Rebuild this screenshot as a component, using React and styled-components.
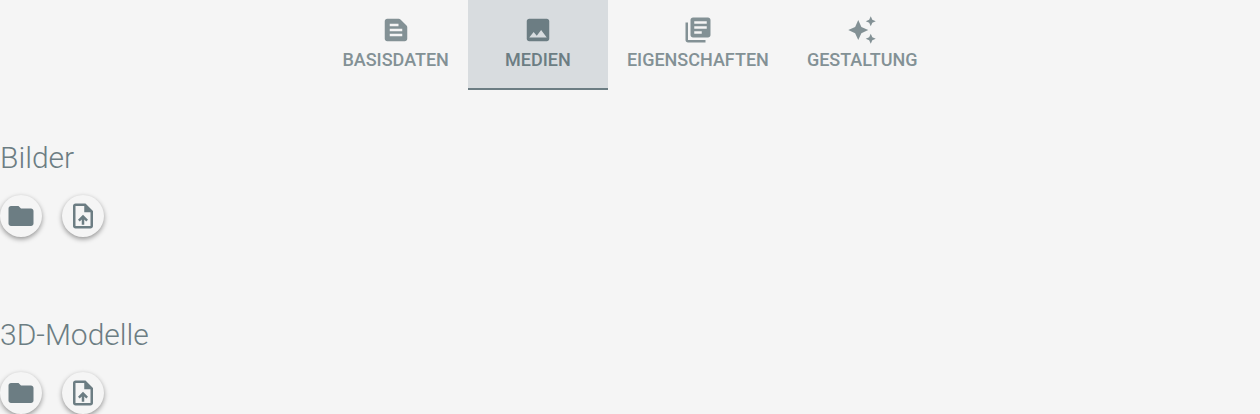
import React, { useState } from "react";
import styled, { createGlobalStyle } from "styled-components";
import { MdTextSnippet, MdImage, MdLibraryBooks, MdAutoAwesome, MdFolder, MdOutlineUploadFile } from "react-icons/md";

const GlobalStyle = createGlobalStyle`
  *, *::before, *::after { box-sizing: border-box; }
  body {
    margin: 0;
    background: #f5f5f5;
    color: #6c7d83;
    font-family: Roboto, "Liberation Sans", sans-serif;
  }
`;

const TabBar = styled.nav`
  display: flex;
  justify-content: center;
`;

const Tab = styled.button`
  display: flex;
  flex-direction: column;
  align-items: center;
  min-width: 140px;
  height: 90px;
  padding: 15px 19px 0;
  border: 0;
  border-bottom: 2px solid ${(p) => (p.$active ? "#6c7d83" : "transparent")};
  background: ${(p) => (p.$active ? "#d8dcdf" : "transparent")};
  color: ${(p) => (p.$active ? "#6c7d83" : "#839195")};
  font: 500 18px/30px Roboto, "Liberation Sans", sans-serif;
  text-transform: uppercase;
  cursor: pointer;

  svg { width: 30px; height: 30px; }
`;

const Content = styled.main`
  display: flex;
  flex-direction: column;
  gap: 78px;
  padding-top: 48px;
`;

const Section = styled.section`
  display: flex;
  flex-direction: column;
  gap: 17px;
`;

const Title = styled.h2`
  margin: 0;
  font-size: 30px;
  line-height: 40px;
  font-weight: 300;
`;

const Actions = styled.div`
  display: flex;
  gap: 20px;
`;

const RoundButton = styled.button`
  display: grid;
  place-items: center;
  width: 42px;
  height: 42px;
  padding: 0;
  border: 0;
  border-radius: 50%;
  background: #f5f5f5;
  color: #6c7d83;
  box-shadow: 0 2px 5px rgba(0, 0, 0, 0.4);
  cursor: pointer;

  svg { width: 30px; height: 30px; }
`;

const tabs = [
  { label: "Basisdaten", Icon: MdTextSnippet },
  { label: "Medien", Icon: MdImage },
  { label: "Eigenschaften", Icon: MdLibraryBooks },
  { label: "Gestaltung", Icon: MdAutoAwesome },
];

const sections = ["Bilder", "3D-Modelle"];

export default function App() {
  const [active, setActive] = useState("Medien");
  return (
    <>
      <GlobalStyle />
      <TabBar>
        {tabs.map(({ label, Icon }) => (
          <Tab key={label} type="button" $active={active === label} onClick={() => setActive(label)}>
            <Icon aria-hidden="true" />
            {label}
          </Tab>
        ))}
      </TabBar>
      <Content>
        {sections.map((name) => (
          <Section key={name}>
            <Title>{name}</Title>
            <Actions>
              <RoundButton type="button" aria-label="Ordner"><MdFolder /></RoundButton>
              <RoundButton type="button" aria-label="Hochladen"><MdOutlineUploadFile /></RoundButton>
            </Actions>
          </Section>
        ))}
      </Content>
    </>
  );
}
